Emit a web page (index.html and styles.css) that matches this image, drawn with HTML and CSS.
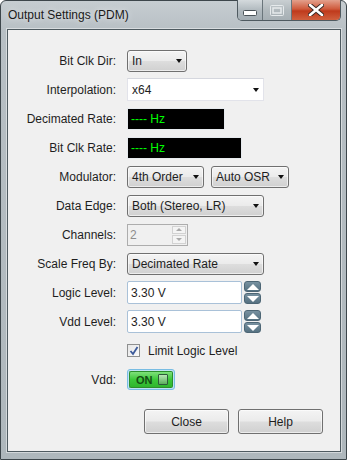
FILE: index.html
```html
<!DOCTYPE html>
<html lang="en">
<head>
    <meta charset="UTF-8">
    <title>Output Settings (PDM)</title>
    <link rel="stylesheet" href="styles.css">
</head>
<body>
    <div class="window">
        <div class="titlebar">
            <span class="title">Output Settings (PDM)</span>
            <div class="caption">
                <span class="cap cap-min">
                    <svg width="14" height="6" viewBox="0 0 14 6"><rect x="0.5" y="0.5" width="13" height="5" rx="1" fill="#fff" stroke="#4a5358"/></svg>
                </span>
                <span class="cap cap-max">
                    <svg width="14" height="11" viewBox="0 0 14 11"><rect x="0.5" y="0.5" width="13" height="10" rx="1" fill="none" stroke="#e6eaec"/><rect x="3" y="3" width="8" height="5" fill="none" stroke="#e6eaec" stroke-width="1.5"/></svg>
                </span>
                <span class="cap cap-close">
                    <svg width="16" height="12" viewBox="0 0 16 12"><path d="M2 1 L14 11 M14 1 L2 11" stroke="#3b2a26" stroke-width="4.5" stroke-linecap="round"/><path d="M2 1 L14 11 M14 1 L2 11" stroke="#fff" stroke-width="2.6" stroke-linecap="round"/></svg>
                </span>
            </div>
        </div>

        <div class="client">
            <div class="form">
                <label>Bit Clk Dir:</label>
                <div class="field"><div class="drop w-in">In<span class="arrow"></span></div></div>

                <label>Interpolation:</label>
                <div class="field"><div class="combo w-wide">x64<span class="arrow"></span></div></div>

                <label>Decimated Rate:</label>
                <div class="field"><div class="readout w-dec">---- Hz</div></div>

                <label>Bit Clk Rate:</label>
                <div class="field"><div class="readout w-clk">---- Hz</div></div>

                <label>Modulator:</label>
                <div class="field pair">
                    <div class="drop w-mod">4th Order<span class="arrow"></span></div>
                    <div class="drop w-osr">Auto OSR<span class="arrow"></span></div>
                </div>

                <label>Data Edge:</label>
                <div class="field"><div class="drop w-wide">Both (Stereo, LR)<span class="arrow"></span></div></div>

                <label>Channels:</label>
                <div class="field">
                    <div class="spinbox disabled">
                        <span class="spin-value">2</span>
                        <span class="mini-spin">
                            <span class="mini up"></span>
                            <span class="mini down"></span>
                        </span>
                    </div>
                </div>

                <label>Scale Freq By:</label>
                <div class="field"><div class="drop w-wide">Decimated Rate<span class="arrow"></span></div></div>

                <label>Logic Level:</label>
                <div class="field level">
                    <div class="textbox">3.30 V</div>
                    <div class="updown"><span class="ud up"></span><span class="ud down"></span></div>
                </div>

                <label>Vdd Level:</label>
                <div class="field level">
                    <div class="textbox">3.30 V</div>
                    <div class="updown"><span class="ud up"></span><span class="ud down"></span></div>
                </div>

                <span></span>
                <div class="field check-row">
                    <span class="checkbox">
                        <svg width="10" height="10" viewBox="0 0 10 10"><path d="M1.5 5 L4 8 L8.5 1" fill="none" stroke="#3c5a9a" stroke-width="1.8"/></svg>
                    </span>
                    <span>Limit Logic Level</span>
                </div>

                <label>Vdd:</label>
                <div class="field"><div class="toggle"><span class="toggle-text">ON</span><span class="toggle-knob"></span></div></div>
            </div>

            <div class="buttons">
                <button class="btn">Close</button>
                <button class="btn">Help</button>
            </div>
        </div>
    </div>
</body>
</html>
```

FILE: styles.css
```css
body {
    margin: 0;
    padding: 0;
    background: #ffffff;
    font-family: 'Segoe UI', 'Liberation Sans', Arial, sans-serif;
    font-size: 12px;
    color: #1e1e1e;
}

.window {
    width: 347px;
    height: 460px;
    box-sizing: border-box;
    border: 1px solid #3d464b;
    border-radius: 6px 6px 0 0;
    background: linear-gradient(to bottom, #c6cdd1 0px, #b7bfc4 30px, #aeb7bc 100%);
    display: flex;
    flex-direction: column;
}

.titlebar {
    height: 28px;
    display: flex;
    justify-content: space-between;
    align-items: flex-start;
}

.title {
    margin: 7px 0 0 7px;
    font-size: 12px;
    color: #1a1a1a;
    text-shadow: 0 0 6px rgba(255, 255, 255, 0.8);
}

.caption {
    display: flex;
    margin: -1px 5px 0 0;
    height: 20px;
    border: 1px solid #4f5a60;
    border-top: none;
    border-radius: 0 0 5px 5px;
    overflow: hidden;
}

.cap {
    display: flex;
    align-items: center;
    justify-content: center;
    height: 20px;
    box-sizing: border-box;
}

.cap-min {
    width: 25px;
    background: linear-gradient(to bottom, #d4dadd, #b1babf 50%, #a3adb3);
    border-right: 1px solid #6a757b;
}

.cap-min svg {
    margin-top: 6px;
}

.cap-max {
    width: 29px;
    background: linear-gradient(to bottom, #c9cfd2, #b2babe 50%, #a6afb4);
    border-right: 1px solid #6a757b;
}

.cap-close {
    width: 48px;
    background: linear-gradient(to bottom, #e3a08c, #cf5a3c 45%, #bf3a1c 55%, #d0603e);
}

.client {
    flex: 1;
    margin: 0 5px 7px 6px;
    background: #f0f0f0;
    border: 1px solid #4e5a60;
    box-shadow: 0 0 0 1px rgba(255, 255, 255, 0.45);
    display: flex;
    flex-direction: column;
}

.form {
    margin-top: 19px;
    display: grid;
    grid-template-columns: 108px auto;
    grid-auto-rows: 23px;
    column-gap: 11px;
    row-gap: 6px;
}

.form label {
    text-align: right;
    align-self: center;
}

.field {
    display: flex;
    align-items: center;
}

.pair {
    gap: 7px;
}

/* drop-down list (button style) */
.drop {
    position: relative;
    height: 22px;
    box-sizing: border-box;
    padding: 0 0 0 4px;
    border: 1px solid #707070;
    border-radius: 3px;
    background: linear-gradient(to bottom, #f4f4f4 0%, #ebebeb 48%, #dddddd 52%, #d0d0d0 100%);
    display: flex;
    align-items: center;
    box-shadow: inset 0 0 0 1px rgba(255, 255, 255, 0.6);
}

.combo {
    position: relative;
    height: 23px;
    box-sizing: border-box;
    padding: 0 0 0 4px;
    border: 1px solid #e2e3ea;
    border-top-color: #d5d7de;
    background: #ffffff;
    display: flex;
    align-items: center;
}

.arrow {
    position: absolute;
    right: 4px;
    top: 50%;
    margin-top: -2px;
    width: 0;
    height: 0;
    border-left: 3.5px solid transparent;
    border-right: 3.5px solid transparent;
    border-top: 4px solid #111;
}

.w-in { width: 60px; }
.w-wide { width: 137px; }
.w-mod { width: 77px; }
.w-osr { width: 78px; }

.readout {
    height: 22px;
    box-sizing: border-box;
    background: #000;
    border: 1px solid #e6eaee;
    color: #00ff00;
    padding-left: 3px;
    display: flex;
    align-items: center;
}

.w-dec { width: 98px; }
.w-clk { width: 115px; }

/* disabled numeric spin box */
.spinbox {
    width: 61px;
    height: 22px;
    box-sizing: border-box;
    border: 1px solid #adadad;
    background: #f0f0f0;
    display: flex;
    justify-content: space-between;
    align-items: stretch;
}

.spin-value {
    color: #8d8d8d;
    padding-left: 2px;
    display: flex;
    align-items: center;
}

.mini-spin {
    width: 14px;
    margin: 1px 1px 1px 0;
    display: flex;
    flex-direction: column;
    gap: 1px;
}

.mini {
    flex: 1;
    border: 1px solid #d2d2d2;
    background: #f4f4f4;
    position: relative;
}

.mini::after {
    content: "";
    position: absolute;
    left: 50%;
    top: 50%;
    margin: -1.5px 0 0 -3px;
    border-left: 3px solid transparent;
    border-right: 3px solid transparent;
}

.mini.up::after { border-bottom: 3px solid #a9a9a9; }
.mini.down::after { border-top: 3px solid #a9a9a9; }

/* level text box + blue up/down */
.level {
    gap: 2px;
}

.textbox {
    width: 115px;
    height: 23px;
    box-sizing: border-box;
    border: 1px solid #a9c1d8;
    border-radius: 2px;
    background: #fff;
    padding-left: 3px;
    display: flex;
    align-items: center;
}

.updown {
    width: 17px;
    height: 23px;
    display: flex;
    flex-direction: column;
    gap: 1px;
}

.ud {
    flex: 1;
    border-radius: 3px;
    background: linear-gradient(to bottom, #7891a0, #557181);
    border: 1px solid #4d6675;
    box-sizing: border-box;
    position: relative;
}

.ud::after {
    content: "";
    position: absolute;
    left: 50%;
    top: 50%;
    margin: -3px 0 0 -6px;
    border-left: 6px solid transparent;
    border-right: 6px solid transparent;
}

.ud.up::after { border-bottom: 6px solid #ffffff; }
.ud.down::after { border-top: 6px solid #ffffff; margin-top: -3px; }

.check-row {
    gap: 8px;
}

.checkbox {
    width: 13px;
    height: 13px;
    box-sizing: border-box;
    border: 1px solid #8e8f8f;
    background: linear-gradient(135deg, #e6e6e6, #fafafa);
    display: flex;
    align-items: center;
    justify-content: center;
}

.toggle {
    width: 48px;
    height: 21px;
    box-sizing: border-box;
    border: 1px solid #79bde3;
    border-radius: 3px;
    padding: 1px;
    background: #bfe3f5;
    display: flex;
}

.toggle::before {
    content: none;
}

.toggle-text {
    flex: 1;
    display: flex;
    align-items: center;
    font-weight: bold;
    font-size: 11px;
    color: #134d13;
    padding-left: 6px;
    background: linear-gradient(to bottom, #7fe07b, #3cc83a 50%, #2fb52d);
    border: 1px solid #2b8f2b;
    border-right: none;
    border-radius: 2px 0 0 2px;
}

.toggle-knob {
    width: 14px;
    background: linear-gradient(to bottom, #7fe07b, #3cc83a 50%, #2fb52d);
    border: 1px solid #2b8f2b;
    border-left: none;
    border-radius: 0 2px 2px 0;
    display: flex;
    align-items: center;
    position: relative;
}

.toggle-knob::after {
    content: "";
    width: 10px;
    height: 11px;
    box-sizing: border-box;
    border: 1px solid #2d5a3a;
    border-radius: 1px;
    background: linear-gradient(to bottom, #b8e6b6, #5cae5c);
}

.buttons {
    display: flex;
    justify-content: flex-end;
    gap: 9px;
    margin: 18px 17px 0 0;
}

.btn {
    width: 85px;
    height: 25px;
    font-family: inherit;
    font-size: 12px;
    color: #1e1e1e;
    border: 1px solid #707070;
    border-radius: 3px;
    background: linear-gradient(to bottom, #f4f4f4 0%, #ebebeb 48%, #dddddd 52%, #d0d0d0 100%);
    box-shadow: inset 0 0 0 1px rgba(255, 255, 255, 0.6);
    padding: 0;
}
```
